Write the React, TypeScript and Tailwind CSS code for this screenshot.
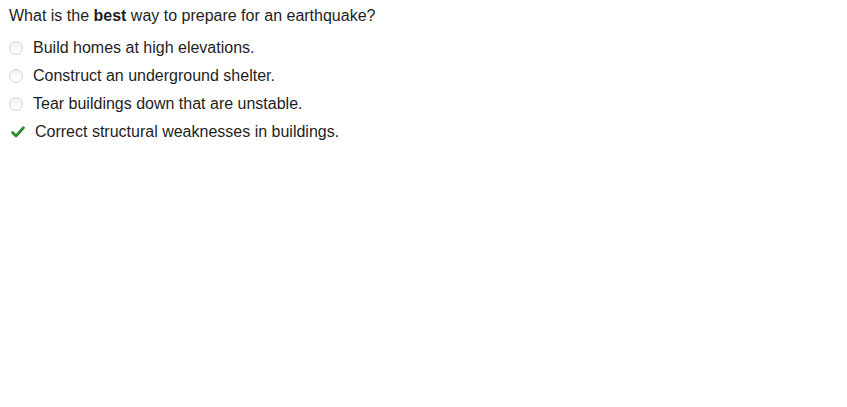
import React from 'react';

const options = [
  { text: 'Build homes at high elevations.', correct: false },
  { text: 'Construct an underground shelter.', correct: false },
  { text: 'Tear buildings down that are unstable.', correct: false },
  { text: 'Correct structural weaknesses in buildings.', correct: true },
];

function Check() {
  return (
    <svg width="14" height="12" viewBox="0 0 14 12" className="block">
      <path d="M1.6 6.6 L5 10 L12.4 1.8" fill="none" stroke="#2e8b2e" strokeWidth="2.8" strokeLinecap="round" strokeLinejoin="round" />
    </svg>
  );
}

export default function App() {
  return (
    <div className="w-[847px] h-[407px] bg-white text-[#1e1e1e] text-[16px] leading-[18px] font-['Liberation_Sans',Arial,sans-serif] pl-[9px] pt-[7px]">
      <p>
        What is the <b>best</b> way to prepare for an earthquake?
      </p>
      <ul className="mt-[14px] flex flex-col gap-[10px]">
        {options.map((o) => (
          <li key={o.text} className="flex items-center h-[18px]">
            {o.correct ? (
              <span className="w-[26px] pl-[2px] flex items-center">
                <Check />
              </span>
            ) : (
              <span className="w-[24px] flex items-center">
                <span className="w-[14px] h-[14px] rounded-full border border-[#d6d6d6] bg-gradient-to-b from-[#f2f2f2] to-white" />
              </span>
            )}
            <span>{o.text}</span>
          </li>
        ))}
      </ul>
    </div>
  );
}
